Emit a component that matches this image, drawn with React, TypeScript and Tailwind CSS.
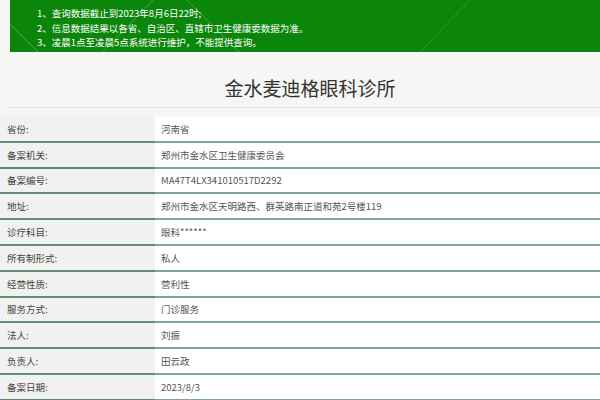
import React from 'react';

const notices = [
    '1、查询数据截止到2023年8月6日22时;',
    '2、信息数据结果以各省、自治区、直辖市卫生健康委数据为准。',
    '3、凌晨1点至凌晨5点系统进行维护，不能提供查询。',
];

const rows: [string, string][] = [
    ['省份:', '河南省'],
    ['备案机关:', '郑州市金水区卫生健康委员会'],
    ['备案编号:', 'MA47T4LX341010517D2292'],
    ['地址:', '郑州市金水区天明路西、群英路南正道和苑2号楼119'],
    ['诊疗科目:', '眼科******'],
    ['所有制形式:', '私人'],
    ['经营性质:', '营利性'],
    ['服务方式:', '门诊服务'],
    ['法人:', '刘振'],
    ['负责人:', '田云政'],
    ['备案日期:', '2023/8/3'],
];

export default function App() {
    return (
        <div className="w-[600px] h-[400px] overflow-hidden bg-[#f6f6f4] font-['Noto_Sans_CJK_SC','Noto_Sans',sans-serif]">
            {/* notice banner */}
            <div className="relative ml-[10px] h-[52px] bg-[#0b860b] pl-[27px] pt-[6px] text-[9.5px] leading-[14.5px] text-white overflow-hidden">
                <svg className="absolute inset-0 pointer-events-none" width="590" height="52">
                    <line x1="0" y1="24" x2="28" y2="52" stroke="#ffffff" strokeOpacity="0.25" />
                    <line x1="143" y1="0" x2="93" y2="52" stroke="#ffffff" strokeOpacity="0.25" />
                    <line x1="177" y1="0" x2="229" y2="52" stroke="#ffffff" strokeOpacity="0.25" />
                    <line x1="460" y1="0" x2="410" y2="52" stroke="#ffffff" strokeOpacity="0.15" />
                </svg>
                {notices.map((n) => (
                    <div key={n} className="relative whitespace-nowrap">
                        {n}
                    </div>
                ))}
            </div>

            {/* title */}
            <div className="ml-[7px] h-[56px] border-b border-[#e6e6e4] pl-[13px] pt-[24px] text-center text-[19px] leading-[24px] text-[#333]">
                金水麦迪格眼科诊所
            </div>

            {/* detail table */}
            <div className="mt-[9px]">
                {rows.map(([label, value]) => (
                    <div key={label} className="flex h-[25.8px] text-[9.5px] text-[#444]">
                        <div className="flex w-[155px] shrink-0 items-center border-b-2 border-[#5f8b77] bg-[#f1f1f0] pl-[7px]">
                            {label}
                        </div>
                        <div className="flex flex-1 items-center border-b-2 border-[#7ea696] bg-white pl-[6px] text-[#555]">
                            {value}
                        </div>
                    </div>
                ))}
            </div>
        </div>
    );
}
